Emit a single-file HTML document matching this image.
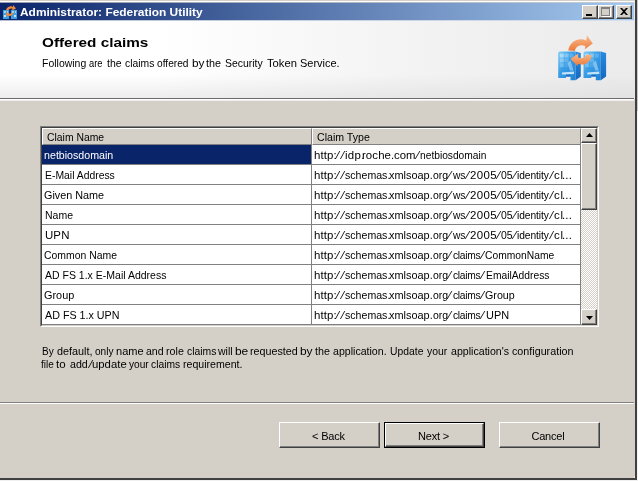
<!DOCTYPE html>
<html>
<head>
<meta charset="utf-8">
<title>Administrator: Federation Utility</title>
<style>
html,body{margin:0;padding:0;}
body{width:638px;height:481px;overflow:hidden;background:#d4d0c8;font-family:"Liberation Sans",sans-serif;font-size:11px;letter-spacing:-0.17px;color:#000;position:relative;}
.abs{position:absolute;}
#win{left:0;top:0;width:638px;height:481px;background:#d4d0c8;will-change:transform;}
#titlebar{left:0;top:3px;width:634px;height:17px;background:linear-gradient(to right,#0a246a 0%,#a6caf0 100%);}
.tbl{z-index:2;left:0;width:634px;height:1px;background:linear-gradient(to right,#0a246a 0%,#a6caf0 100%);}
#title{left:20px;top:5px;color:#fff;font-weight:bold;font-size:11px;line-height:14px;white-space:nowrap;letter-spacing:0;transform:scaleX(1.083);transform-origin:0 0;}
.tb{width:16px;height:14px;top:5px;background:#d4d0c8;box-sizing:border-box;border:1px solid;border-color:#fff #404040 #404040 #fff;box-shadow:inset -1px -1px 0 #808080;}
#header{left:0;top:20px;width:634px;height:78px;background:linear-gradient(to bottom,rgba(255,255,255,0) 0%,rgba(225,225,225,0) 70%,rgba(215,215,215,0.45) 100%),linear-gradient(to right,#ffffff 0%,#ffffff 25%,#f3f3f3 65%,#ebebeb 100%);}
#h1{left:42px;top:35px;font-weight:bold;font-size:13px;line-height:15px;white-space:nowrap;letter-spacing:0;transform:scaleX(1.178);transform-origin:0 0;}
#h2{left:42px;top:57px;line-height:13px;width:400px;height:13px;}
#sep1a{left:0;top:98px;width:634px;height:1px;background:#6c6c6c;}
#sep1b{left:0;top:99px;width:634px;height:2px;background:linear-gradient(#fff 50%,#f0eeea 50%);}
#table{left:40px;top:126px;width:559px;height:201px;box-sizing:border-box;border:1px solid;border-color:#808080 #fff #fff #808080;}
#tin{left:0;top:0;width:557px;height:199px;box-sizing:border-box;border:1px solid;border-color:#404040 #d4d0c8 #d4d0c8 #404040;background:#fff;}
.hd{top:0;height:17px;background:#d4d0c8;box-sizing:border-box;border:1px solid;border-color:#fff #808080 #808080 #fff;line-height:17px;padding:0;white-space:nowrap;}
.row{left:0;width:539px;height:20px;}
.c1{left:0;top:0;width:270px;height:20px;box-sizing:border-box;border-right:1px solid #808080;border-bottom:1px solid #808080;line-height:21px;padding:0;white-space:nowrap;overflow:hidden;}
.c2{left:270px;top:0;width:269px;height:20px;box-sizing:border-box;border-right:1px solid #808080;border-bottom:1px solid #808080;line-height:21px;padding:0;white-space:nowrap;overflow:hidden;}
.sel{background:#0a246a;color:#fff;}
.g{position:absolute;top:0;left:0;white-space:pre;letter-spacing:0;}
#sb{left:539px;top:0;width:16px;height:197px;background-color:#eae8e3;background-image:conic-gradient(#fff 25%,#d4d0c8 0 50%,#fff 0 75%,#d4d0c8 0);background-size:2px 2px;}
.btn3d{background:#d4d0c8;box-sizing:border-box;border:1px solid;border-color:#fff #404040 #404040 #fff;box-shadow:inset -1px -1px 0 #808080;}
#p1{left:42px;top:345px;line-height:13px;width:560px;height:13px;}
#p2{left:42px;top:358px;line-height:13px;width:560px;height:13px;}
#sep2a{left:0;top:402px;width:634px;height:1px;background:#808080;}
#sep2b{left:0;top:403px;width:634px;height:1px;background:#fff;}
.btn{top:422px;height:26px;box-sizing:border-box;background:#d4d0c8;border:1px solid;border-color:#fff #404040 #404040 #fff;box-shadow:inset -1px -1px 0 #808080;text-align:center;line-height:27px;}
</style>
</head>
<body>
<div id="win" class="abs">
  <div class="abs" style="left:0;top:0;width:638px;height:1px;background:#d4d0c8;"></div><div class="abs" style="left:0;top:1px;width:636px;height:1px;background:#fff;"></div>
  <div id="titlebar" class="abs"></div><div class="abs tbl" style="top:2px;opacity:0.3"></div><div class="abs tbl" style="top:20px;opacity:0.3"></div>
  <svg class="abs" style="left:2px;top:4px" width="16" height="16" viewBox="0 0 16 16">
    <rect x="1" y="6" width="6" height="9" fill="#3f9ee0"/>
    <rect x="9" y="6" width="6" height="9" fill="#3f9ee0"/>
    <rect x="2" y="7" width="2" height="2" fill="#9fd4f7"/><rect x="5" y="7" width="1" height="2" fill="#9fd4f7"/>
    <rect x="10" y="7" width="2" height="2" fill="#9fd4f7"/><rect x="13" y="7" width="1" height="2" fill="#9fd4f7"/>
    <rect x="2" y="11" width="2" height="2" fill="#bfe3fa"/><rect x="12" y="11" width="2" height="2" fill="#bfe3fa"/>
    <path d="M4 6 C5 2.5 9 1.5 11 3 L11 1 L14 4.5 L10 6.5 L10.5 4.8 C9 4 7 4.5 6 6.5 Z" fill="#f08a3c"/>
    <path d="M11.5 9 C10.5 12 7.5 12.5 6 11.5 L6 13 L3.5 10 L6.5 8 L6.3 9.6 C7.5 10.2 9 9.8 9.6 8.4 Z" fill="#f08a3c"/>
  </svg>
  <div id="title" class="abs">Administrator: Federation Utility</div>
  <div class="abs tb" style="left:582px;"><div class="abs" style="left:3px;top:8px;width:6px;height:2px;background:#000"></div></div>
  <div class="abs tb" style="left:598px;"><div class="abs" style="left:2px;top:1px;width:9px;height:9px;box-sizing:border-box;border:1px solid #808080;border-top-width:2px;box-shadow:1px 1px 0 #fff"></div></div>
  <div class="abs tb" style="left:616px;">
    <svg class="abs" style="left:3px;top:2px" width="8" height="7" viewBox="0 0 8 7"><path d="M0 0h2l2 2 2-2h2L5 3.5 8 7H6L4 5 2 7H0l3-3.5z" fill="#000"/></svg>
  </div>

  <div id="header" class="abs"></div>
  <div id="h1" class="abs">Offered claims</div>
  <div id="h2" class="abs"><span class="g" style="left:-0.2px;transform:scaleX(0.950);transform-origin:1px 0">Following</span> <span class="g" style="left:47.1px;transform:scaleX(0.851);transform-origin:0px 0">are</span> <span class="g" style="left:64.6px;transform:scaleX(0.951);transform-origin:0px 0">the</span> <span class="g" style="left:82.6px;transform:scaleX(0.941);transform-origin:0px 0">claims</span> <span class="g" style="left:115.3px;transform:scaleX(0.925);transform-origin:0px 0">offered</span> <span class="g" style="left:149.6px;transform:scaleX(1.074);transform-origin:1px 0">by</span> <span class="g" style="left:164.4px;transform:scaleX(0.979);transform-origin:0px 0">the</span> <span class="g" style="left:182.6px;transform:scaleX(0.948);transform-origin:1px 0">Security</span> <span class="g" style="left:225.0px;transform:scaleX(1.018);transform-origin:0px 0">Token</span> <span class="g" style="left:257.8px;transform:scaleX(0.997);transform-origin:1px 0">Service.</span></div>
  <svg id="bigicon" class="abs" style="left:550px;top:30px" width="64" height="56" viewBox="550 30 64 56">
    <defs>
      <linearGradient id="sv" x1="0" y1="0" x2="1" y2="1"><stop offset="0" stop-color="#86ccf6"/><stop offset="0.4" stop-color="#3c9fe6"/><stop offset="1" stop-color="#1f82d6"/></linearGradient>
      <linearGradient id="sd" x1="0" y1="0" x2="0" y2="1"><stop offset="0" stop-color="#2a8ade"/><stop offset="1" stop-color="#1468c0"/></linearGradient>
      <linearGradient id="ar" x1="0" y1="0" x2="0" y2="1"><stop offset="0" stop-color="#f9b988"/><stop offset="1" stop-color="#ec7a3c"/></linearGradient>
      <filter id="bl" x="-10%" y="-10%" width="120%" height="120%"><feGaussianBlur stdDeviation="0.55"/></filter>
    </defs>
    <g filter="url(#bl)">
      <path d="M558.2 52.6 L559.5 51.6 L575.5 51.6 L575.5 80.2 L570.5 80.2 L570.5 76.6 L566 76.6 L566 78 L558.2 78 Z" fill="url(#sv)"/>
      <path d="M575.5 51.6 L580.8 53 L580.8 76.4 L575.5 80.2 Z" fill="url(#sd)"/>
      <rect x="559.8" y="53.6" width="4" height="4" fill="#c4e8fc" opacity="0.7"/><rect x="564.6" y="53.6" width="4" height="4" fill="#b0defa" opacity="0.55"/><rect x="569.4" y="53.6" width="4" height="4" fill="#9ed6f8" opacity="0.35"/>
      <rect x="559.8" y="58.4" width="4" height="4" fill="#b0defa" opacity="0.6"/><rect x="564.6" y="58.4" width="4" height="4" fill="#9ed6f8" opacity="0.4"/>
      <rect x="559.8" y="63.2" width="4" height="4" fill="#9ed6f8" opacity="0.45"/><rect x="564.6" y="63.2" width="4" height="4" fill="#8ccdf6" opacity="0.25"/>
      <path d="M567.5 63 L570.5 60.5 L573.5 70.5 L570 70.5 Z" fill="#c8e8fc" opacity="0.5"/>
      <path d="M562 72.4 L574 71.4 L574 74 L566 74.6 L562 74.6 Z" fill="#d2ecfd" opacity="0.9"/>
      <rect x="566" y="74.6" width="4.5" height="2" fill="#125fb4" opacity="0.75"/>
      <path d="M583.5 52.6 L584.8 51.6 L600.8 51.6 L600.8 80.2 L595.8 80.2 L595.8 76.6 L591.3 76.6 L591.3 78 L583.5 78 Z" fill="url(#sv)"/>
      <path d="M600.8 51.6 L606.0999999999999 53 L606.0999999999999 76.4 L600.8 80.2 Z" fill="url(#sd)"/>
      <rect x="585.0999999999999" y="53.6" width="4" height="4" fill="#c4e8fc" opacity="0.7"/><rect x="589.9" y="53.6" width="4" height="4" fill="#b0defa" opacity="0.55"/><rect x="594.6999999999999" y="53.6" width="4" height="4" fill="#9ed6f8" opacity="0.35"/>
      <rect x="585.0999999999999" y="58.4" width="4" height="4" fill="#b0defa" opacity="0.6"/><rect x="589.9" y="58.4" width="4" height="4" fill="#9ed6f8" opacity="0.4"/>
      <rect x="585.0999999999999" y="63.2" width="4" height="4" fill="#9ed6f8" opacity="0.45"/><rect x="589.9" y="63.2" width="4" height="4" fill="#8ccdf6" opacity="0.25"/>
      <path d="M592.8 63 L595.8 60.5 L598.8 70.5 L595.3 70.5 Z" fill="#c8e8fc" opacity="0.5"/>
      <path d="M587.3 72.4 L599.3 71.4 L599.3 74 L591.3 74.6 L587.3 74.6 Z" fill="#d2ecfd" opacity="0.9"/>
      <rect x="591.3" y="74.6" width="4.5" height="2" fill="#125fb4" opacity="0.75"/>
      <path d="M568.3 50.5 C569.5 41.5 579 36.8 586.2 40.6 L587 35.6 L592.8 43.4 L584.8 49.2 L585.4 46 C580.5 44 576 46 574.8 51 Z" fill="url(#ar)"/>
      <path d="M591.6 55.2 C591 62.5 583.5 66.4 578 63.8 L577.6 66 L570.4 59 L578.2 53.6 L578.2 57.4 C582 59.2 585.6 57.8 586.4 54.6 Z" fill="url(#ar)"/>
    </g>
  </svg>
  <div id="sep1a" class="abs"></div><div id="sep1b" class="abs"></div>

  <div id="table" class="abs">
    <div id="tin" class="abs">
      <div class="abs hd" style="left:0;width:270px;"><span class="g" style="left:4.1px;transform:scaleX(0.943);transform-origin:1px 0">Claim Name</span></div>
      <div class="abs hd" style="left:270px;width:269px;"><span class="g" style="left:3.9px;transform:scaleX(0.963);transform-origin:1px 0">Claim Type</span></div>
      <div class="abs row" style="top:17px"><div class="abs c1 sel"><span class="g" style="left:1.8px;transform:scaleX(0.968);transform-origin:1px 0">netbiosdomain</span></div><div class="abs c2"><span class="g" style="left:1.7px;transform:scaleX(1.040);transform-origin:1px 0;letter-spacing:0.11px">http:</span><span class="g" style="left:23.8px;transform:skewX(-15.1deg);transform-origin:50% 49%">/</span><span class="g" style="left:29.2px;transform:skewX(-15.1deg);transform-origin:50% 49%">/</span><span class="g" style="left:32.5px;transform:scaleX(1.040);transform-origin:1px 0;letter-spacing:0.32px">idp.</span><span class="g" style="left:50.3px;transform:scaleX(1.040);transform-origin:1px 0;letter-spacing:0.09px">roche.</span><span class="g" style="left:82.3px;transform:scaleX(1.031);transform-origin:0px 0">com</span><span class="g" style="left:104.2px;transform:skewX(-17.6deg);transform-origin:50% 49%">/</span><span class="g" style="left:108.2px;transform:scaleX(0.930);transform-origin:1px 0;letter-spacing:-0.02px">netbiosdomain</span></div></div>
      <div class="abs row" style="top:37px"><div class="abs c1"><span class="g" style="left:2.9px;transform:scaleX(0.943);transform-origin:1px 0">E-Mail Address</span></div><div class="abs c2"><span class="g" style="left:1.8px;transform:scaleX(1.040);transform-origin:1px 0;letter-spacing:0.14px">http:</span><span class="g" style="left:23.8px;transform:skewX(-15.1deg);transform-origin:50% 49%">/</span><span class="g" style="left:29.2px;transform:skewX(-15.1deg);transform-origin:50% 49%">/</span><span class="g" style="left:33.0px;transform:scaleX(0.962);transform-origin:1px 0">schemas.</span><span class="g" style="left:77.4px;transform:scaleX(0.993);transform-origin:0px 0">xmlsoap.</span><span class="g" style="left:120.7px;transform:scaleX(0.951);transform-origin:0px 0">org</span><span class="g" style="left:136.2px;transform:skewX(-20.6deg);transform-origin:50% 49%">/</span><span class="g" style="left:141.2px;transform:scaleX(0.930);transform-origin:0px 0;letter-spacing:-0.25px">ws</span><span class="g" style="left:154.0px;transform:skewX(-17.0deg);transform-origin:50% 49%">/</span><span class="g" style="left:157.7px;transform:scaleX(1.040);transform-origin:1px 0;letter-spacing:0.39px">2005</span><span class="g" style="left:184.8px;transform:skewX(-17.0deg);transform-origin:50% 49%">/</span><span class="g" style="left:188.8px;transform:scaleX(0.947);transform-origin:0px 0">05</span><span class="g" style="left:201.2px;transform:skewX(-19.4deg);transform-origin:50% 49%">/</span><span class="g" style="left:205.1px;transform:scaleX(0.930);transform-origin:1px 0;letter-spacing:-0.09px">identity</span><span class="g" style="left:237.7px;transform:skewX(-14.5deg);transform-origin:50% 49%">/</span><span class="g" style="left:241.7px;transform:scaleX(1.040);transform-origin:0px 0;letter-spacing:0.81px">cl</span><span class="g" style="left:250.2px;transform:scaleX(1.040);transform-origin:1px 0;letter-spacing:0.17px">...</span></div></div>
      <div class="abs row" style="top:57px"><div class="abs c1"><span class="g" style="left:1.8px;transform:scaleX(0.983);transform-origin:1px 0">Given Name</span></div><div class="abs c2"><span class="g" style="left:1.8px;transform:scaleX(1.040);transform-origin:1px 0;letter-spacing:0.14px">http:</span><span class="g" style="left:23.8px;transform:skewX(-15.1deg);transform-origin:50% 49%">/</span><span class="g" style="left:29.2px;transform:skewX(-15.1deg);transform-origin:50% 49%">/</span><span class="g" style="left:33.0px;transform:scaleX(0.962);transform-origin:1px 0">schemas.</span><span class="g" style="left:77.4px;transform:scaleX(0.993);transform-origin:0px 0">xmlsoap.</span><span class="g" style="left:120.7px;transform:scaleX(0.951);transform-origin:0px 0">org</span><span class="g" style="left:136.2px;transform:skewX(-20.6deg);transform-origin:50% 49%">/</span><span class="g" style="left:141.2px;transform:scaleX(0.930);transform-origin:0px 0;letter-spacing:-0.25px">ws</span><span class="g" style="left:154.0px;transform:skewX(-17.0deg);transform-origin:50% 49%">/</span><span class="g" style="left:157.7px;transform:scaleX(1.040);transform-origin:1px 0;letter-spacing:0.39px">2005</span><span class="g" style="left:184.8px;transform:skewX(-17.0deg);transform-origin:50% 49%">/</span><span class="g" style="left:188.8px;transform:scaleX(0.947);transform-origin:0px 0">05</span><span class="g" style="left:201.2px;transform:skewX(-19.4deg);transform-origin:50% 49%">/</span><span class="g" style="left:205.1px;transform:scaleX(0.930);transform-origin:1px 0;letter-spacing:-0.09px">identity</span><span class="g" style="left:237.7px;transform:skewX(-14.5deg);transform-origin:50% 49%">/</span><span class="g" style="left:241.7px;transform:scaleX(1.040);transform-origin:0px 0;letter-spacing:0.81px">cl</span><span class="g" style="left:250.2px;transform:scaleX(1.040);transform-origin:1px 0;letter-spacing:0.17px">...</span></div></div>
      <div class="abs row" style="top:77px"><div class="abs c1"><span class="g" style="left:2.9px;transform:scaleX(0.953);transform-origin:1px 0">Name</span></div><div class="abs c2"><span class="g" style="left:1.8px;transform:scaleX(1.040);transform-origin:1px 0;letter-spacing:0.14px">http:</span><span class="g" style="left:23.8px;transform:skewX(-15.1deg);transform-origin:50% 49%">/</span><span class="g" style="left:29.2px;transform:skewX(-15.1deg);transform-origin:50% 49%">/</span><span class="g" style="left:33.0px;transform:scaleX(0.962);transform-origin:1px 0">schemas.</span><span class="g" style="left:77.4px;transform:scaleX(0.993);transform-origin:0px 0">xmlsoap.</span><span class="g" style="left:120.7px;transform:scaleX(0.951);transform-origin:0px 0">org</span><span class="g" style="left:136.2px;transform:skewX(-20.6deg);transform-origin:50% 49%">/</span><span class="g" style="left:141.2px;transform:scaleX(0.930);transform-origin:0px 0;letter-spacing:-0.25px">ws</span><span class="g" style="left:154.0px;transform:skewX(-17.0deg);transform-origin:50% 49%">/</span><span class="g" style="left:157.7px;transform:scaleX(1.040);transform-origin:1px 0;letter-spacing:0.39px">2005</span><span class="g" style="left:184.8px;transform:skewX(-17.0deg);transform-origin:50% 49%">/</span><span class="g" style="left:188.8px;transform:scaleX(0.947);transform-origin:0px 0">05</span><span class="g" style="left:201.2px;transform:skewX(-19.4deg);transform-origin:50% 49%">/</span><span class="g" style="left:205.1px;transform:scaleX(0.930);transform-origin:1px 0;letter-spacing:-0.09px">identity</span><span class="g" style="left:237.7px;transform:skewX(-14.5deg);transform-origin:50% 49%">/</span><span class="g" style="left:241.7px;transform:scaleX(1.040);transform-origin:0px 0;letter-spacing:0.81px">cl</span><span class="g" style="left:250.2px;transform:scaleX(1.040);transform-origin:1px 0;letter-spacing:0.17px">...</span></div></div>
      <div class="abs row" style="top:97px"><div class="abs c1"><span class="g" style="left:2.9px;transform:scaleX(1.040);transform-origin:1px 0;letter-spacing:0.14px">UPN</span></div><div class="abs c2"><span class="g" style="left:1.8px;transform:scaleX(1.040);transform-origin:1px 0;letter-spacing:0.14px">http:</span><span class="g" style="left:23.8px;transform:skewX(-15.1deg);transform-origin:50% 49%">/</span><span class="g" style="left:29.2px;transform:skewX(-15.1deg);transform-origin:50% 49%">/</span><span class="g" style="left:33.0px;transform:scaleX(0.962);transform-origin:1px 0">schemas.</span><span class="g" style="left:77.4px;transform:scaleX(0.993);transform-origin:0px 0">xmlsoap.</span><span class="g" style="left:120.7px;transform:scaleX(0.951);transform-origin:0px 0">org</span><span class="g" style="left:136.2px;transform:skewX(-20.6deg);transform-origin:50% 49%">/</span><span class="g" style="left:141.2px;transform:scaleX(0.930);transform-origin:0px 0;letter-spacing:-0.25px">ws</span><span class="g" style="left:154.0px;transform:skewX(-17.0deg);transform-origin:50% 49%">/</span><span class="g" style="left:157.7px;transform:scaleX(1.040);transform-origin:1px 0;letter-spacing:0.39px">2005</span><span class="g" style="left:184.8px;transform:skewX(-17.0deg);transform-origin:50% 49%">/</span><span class="g" style="left:188.8px;transform:scaleX(0.947);transform-origin:0px 0">05</span><span class="g" style="left:201.2px;transform:skewX(-19.4deg);transform-origin:50% 49%">/</span><span class="g" style="left:205.1px;transform:scaleX(0.930);transform-origin:1px 0;letter-spacing:-0.09px">identity</span><span class="g" style="left:237.7px;transform:skewX(-14.5deg);transform-origin:50% 49%">/</span><span class="g" style="left:241.7px;transform:scaleX(1.040);transform-origin:0px 0;letter-spacing:0.81px">cl</span><span class="g" style="left:250.2px;transform:scaleX(1.040);transform-origin:1px 0;letter-spacing:0.17px">...</span></div></div>
      <div class="abs row" style="top:117px"><div class="abs c1"><span class="g" style="left:1.8px;transform:scaleX(0.946);transform-origin:1px 0">Common Name</span></div><div class="abs c2"><span class="g" style="left:1.8px;transform:scaleX(1.040);transform-origin:1px 0;letter-spacing:0.14px">http:</span><span class="g" style="left:23.8px;transform:skewX(-15.1deg);transform-origin:50% 49%">/</span><span class="g" style="left:29.2px;transform:skewX(-15.1deg);transform-origin:50% 49%">/</span><span class="g" style="left:33.0px;transform:scaleX(0.962);transform-origin:1px 0">schemas.</span><span class="g" style="left:77.4px;transform:scaleX(0.993);transform-origin:0px 0">xmlsoap.</span><span class="g" style="left:120.7px;transform:scaleX(0.951);transform-origin:0px 0">org</span><span class="g" style="left:135.9px;transform:skewX(-17.6deg);transform-origin:50% 49%">/</span><span class="g" style="left:140.5px;transform:scaleX(0.930);transform-origin:0px 0;letter-spacing:-0.32px">claims</span><span class="g" style="left:169.2px;transform:skewX(-17.0deg);transform-origin:50% 49%">/</span><span class="g" style="left:173.1px;transform:scaleX(0.935);transform-origin:1px 0">CommonName</span></div></div>
      <div class="abs row" style="top:137px"><div class="abs c1"><span class="g" style="left:2.8px;transform:scaleX(0.955);transform-origin:0px 0">AD FS 1.x E-Mail Address</span></div><div class="abs c2"><span class="g" style="left:1.8px;transform:scaleX(1.040);transform-origin:1px 0;letter-spacing:0.14px">http:</span><span class="g" style="left:23.8px;transform:skewX(-15.1deg);transform-origin:50% 49%">/</span><span class="g" style="left:29.2px;transform:skewX(-15.1deg);transform-origin:50% 49%">/</span><span class="g" style="left:33.0px;transform:scaleX(0.962);transform-origin:1px 0">schemas.</span><span class="g" style="left:77.4px;transform:scaleX(0.993);transform-origin:0px 0">xmlsoap.</span><span class="g" style="left:120.7px;transform:scaleX(0.951);transform-origin:0px 0">org</span><span class="g" style="left:135.9px;transform:skewX(-17.6deg);transform-origin:50% 49%">/</span><span class="g" style="left:140.5px;transform:scaleX(0.930);transform-origin:0px 0;letter-spacing:-0.32px">claims</span><span class="g" style="left:169.2px;transform:skewX(-17.0deg);transform-origin:50% 49%">/</span><span class="g" style="left:174.0px;transform:scaleX(0.934);transform-origin:1px 0">EmailAddress</span></div></div>
      <div class="abs row" style="top:157px"><div class="abs c1"><span class="g" style="left:1.8px;transform:scaleX(0.989);transform-origin:1px 0">Group</span></div><div class="abs c2"><span class="g" style="left:1.8px;transform:scaleX(1.040);transform-origin:1px 0;letter-spacing:0.14px">http:</span><span class="g" style="left:23.8px;transform:skewX(-15.1deg);transform-origin:50% 49%">/</span><span class="g" style="left:29.2px;transform:skewX(-15.1deg);transform-origin:50% 49%">/</span><span class="g" style="left:33.0px;transform:scaleX(0.962);transform-origin:1px 0">schemas.</span><span class="g" style="left:77.4px;transform:scaleX(0.993);transform-origin:0px 0">xmlsoap.</span><span class="g" style="left:120.7px;transform:scaleX(0.951);transform-origin:0px 0">org</span><span class="g" style="left:135.9px;transform:skewX(-17.6deg);transform-origin:50% 49%">/</span><span class="g" style="left:140.5px;transform:scaleX(0.930);transform-origin:0px 0;letter-spacing:-0.32px">claims</span><span class="g" style="left:169.2px;transform:skewX(-17.0deg);transform-origin:50% 49%">/</span><span class="g" style="left:173.1px;transform:scaleX(0.972);transform-origin:1px 0">Group</span></div></div>
      <div class="abs row" style="top:177px"><div class="abs c1"><span class="g" style="left:2.8px;transform:scaleX(0.975);transform-origin:0px 0">AD FS 1.x UPN</span></div><div class="abs c2"><span class="g" style="left:1.8px;transform:scaleX(1.040);transform-origin:1px 0;letter-spacing:0.14px">http:</span><span class="g" style="left:23.8px;transform:skewX(-15.1deg);transform-origin:50% 49%">/</span><span class="g" style="left:29.2px;transform:skewX(-15.1deg);transform-origin:50% 49%">/</span><span class="g" style="left:33.0px;transform:scaleX(0.962);transform-origin:1px 0">schemas.</span><span class="g" style="left:77.4px;transform:scaleX(0.993);transform-origin:0px 0">xmlsoap.</span><span class="g" style="left:120.7px;transform:scaleX(0.951);transform-origin:0px 0">org</span><span class="g" style="left:135.9px;transform:skewX(-17.6deg);transform-origin:50% 49%">/</span><span class="g" style="left:140.5px;transform:scaleX(0.930);transform-origin:0px 0;letter-spacing:-0.32px">claims</span><span class="g" style="left:169.2px;transform:skewX(-17.0deg);transform-origin:50% 49%">/</span><span class="g" style="left:174.0px;transform:scaleX(0.995);transform-origin:1px 0">UPN</span></div></div>
      <div id="sb" class="abs">
        <div class="abs btn3d" style="left:0;top:0;width:16px;height:15px;"><svg class="abs" style="left:4px;top:4px" width="7" height="4" viewBox="0 0 7 4"><path d="M0 4L3.5 0 7 4z" fill="#000"/></svg></div>
        <div class="abs btn3d" style="left:0;top:15px;width:16px;height:67px;"></div>
        <div class="abs btn3d" style="left:0;top:181px;width:16px;height:16px;"><svg class="abs" style="left:4px;top:6px" width="7" height="4" viewBox="0 0 7 4"><path d="M0 0L3.5 4 7 0z" fill="#000"/></svg></div>
      </div>
    </div>
  </div>

  <div id="p1" class="abs"><span class="g" style="left:0.1px;transform:scaleX(0.912);transform-origin:1px 0">By</span> <span class="g" style="left:15.3px;transform:scaleX(0.985);transform-origin:0px 0">default,</span> <span class="g" style="left:52.8px;transform:scaleX(0.918);transform-origin:0px 0">only</span> <span class="g" style="left:73.5px;transform:scaleX(1.004);transform-origin:1px 0">name</span> <span class="g" style="left:103.7px;transform:scaleX(0.960);transform-origin:0px 0">and</span> <span class="g" style="left:123.7px;transform:scaleX(0.970);transform-origin:1px 0">role</span> <span class="g" style="left:144.5px;transform:scaleX(0.941);transform-origin:0px 0">claims</span> <span class="g" style="left:176.2px;transform:scaleX(0.958);transform-origin:0px 0">will</span> <span class="g" style="left:193.2px;transform:scaleX(1.087);transform-origin:1px 0">be</span> <span class="g" style="left:208.4px;transform:scaleX(0.976);transform-origin:1px 0">requested</span> <span class="g" style="left:257.8px;transform:scaleX(1.085);transform-origin:1px 0">by</span> <span class="g" style="left:272.7px;transform:scaleX(0.979);transform-origin:0px 0">the</span> <span class="g" style="left:290.8px;transform:scaleX(0.963);transform-origin:0px 0">application.</span> <span class="g" style="left:348.3px;transform:scaleX(0.940);transform-origin:1px 0">Update</span> <span class="g" style="left:385.4px;transform:scaleX(0.946);transform-origin:0px 0">your</span> <span class="g" style="left:409.0px;transform:scaleX(0.965);transform-origin:0px 0">application&#x27;s</span> <span class="g" style="left:470.2px;transform:scaleX(0.976);transform-origin:0px 0">configuration</span></div>
  <div id="p2" class="abs"><span class="g" style="left:-0.7px;transform:scaleX(0.910);transform-origin:0px 0">file</span> <span class="g" style="left:14.3px;transform:scaleX(1.048);transform-origin:0px 0">to</span> <span class="g" style="left:27.8px;transform:scaleX(0.966);transform-origin:0px 0">add</span><span class="g" style="left:46.6px;transform:skewX(-15.1deg);transform-origin:50% 49%">/</span><span class="g" style="left:50.3px;transform:scaleX(1.032);transform-origin:1px 0">update</span> <span class="g" style="left:86.8px;transform:scaleX(0.922);transform-origin:0px 0">your</span> <span class="g" style="left:109.4px;transform:scaleX(0.934);transform-origin:0px 0">claims</span> <span class="g" style="left:141.0px;transform:scaleX(0.963);transform-origin:1px 0">requirement.</span></div>
  <div id="sep2a" class="abs"></div><div id="sep2b" class="abs"></div>

  <div id="bback" class="abs btn" style="left:279px;width:101px;text-indent:-2px;">&lt; Back</div>
  <div class="abs" style="left:384px;top:422px;width:101px;height:26px;box-sizing:border-box;border:1px solid #000;">
    <div id="bnext" class="abs btn" style="left:0;top:0;width:99px;height:24px;line-height:25px;text-indent:-2px;">Next &gt;</div>
  </div>
  <div id="bcancel" class="abs btn" style="left:499px;width:101px;text-indent:-3px;">Cancel</div>

  <div class="abs" style="left:634px;top:1px;width:1px;height:98px;background:#e6e6e6;"></div><div class="abs" style="left:634px;top:476px;width:1px;height:2px;background:#ece9e4;"></div>
  <div class="abs" style="left:635px;top:0;width:2px;height:480px;background:#404040;"></div>
  <div class="abs" style="left:637px;top:0;width:1px;height:111px;background:#c8c8c8;"></div><div class="abs" style="left:637px;top:111px;width:1px;height:370px;background:#f4f4f4;"></div>
  <div class="abs" style="left:0;top:478px;width:637px;height:2px;background:#404040;"></div>
  <div class="abs" style="left:0;top:480px;width:638px;height:1px;background:#f0f0f0;"></div>
</div>
</body>
</html>
